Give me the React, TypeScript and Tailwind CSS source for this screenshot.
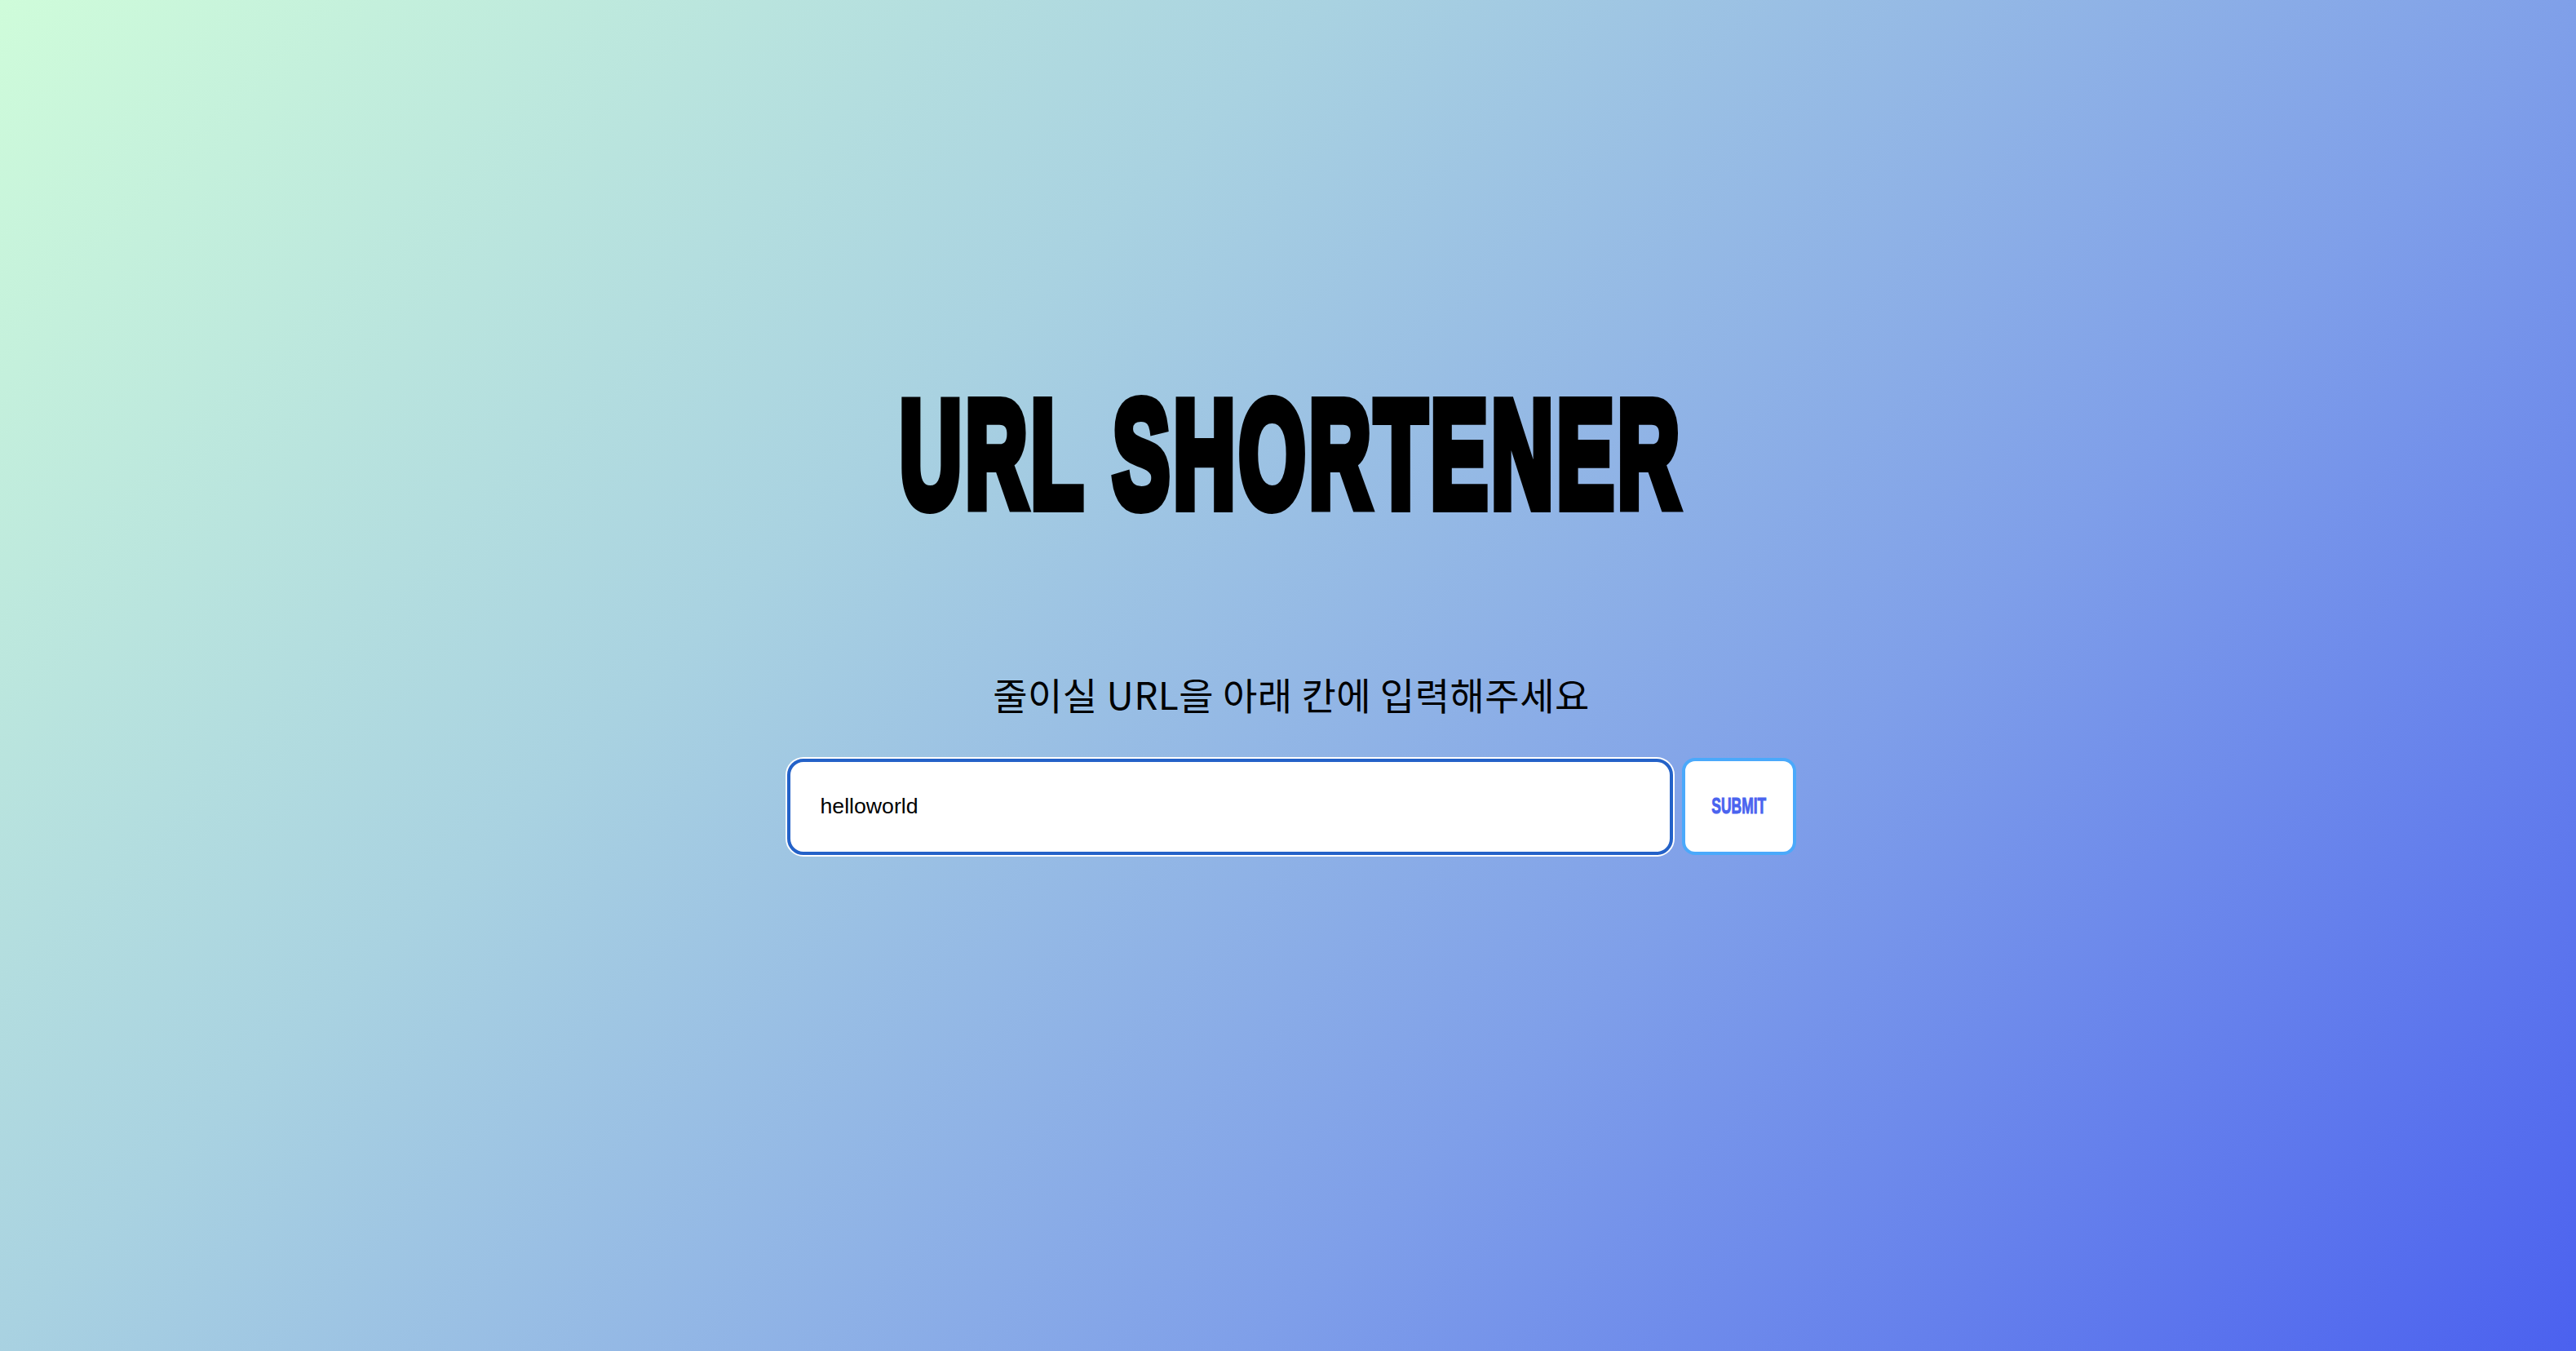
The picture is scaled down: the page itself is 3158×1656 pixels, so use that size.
import { useState } from "react";

export default function App() {
  const [url, setUrl] = useState("helloworld");

  return (
    <main className="min-h-screen w-full bg-[linear-gradient(135deg,#cffcda_0%,#a9d2e1_34%,#7f9fe9_66%,#4b61ef_100%)] flex flex-col items-center pt-[464px] pl-[8px]">
      {/* Title — condensed display face faked with a scaled, stroked bold sans */}
      <h1 className="font-['Liberation_Sans',Arial,sans-serif] font-bold text-[186px] leading-none text-black tracking-[8px] whitespace-nowrap scale-x-[0.564] [-webkit-text-stroke:14px_black]">
        URL SHORTENER
      </h1>

      <p className="mt-[177px] font-['Noto_Sans_CJK_KR','Noto_Sans',sans-serif] text-[46px] leading-none tracking-[0.5px] text-black whitespace-nowrap">
        줄이실 URL을 아래 칸에 입력해주세요
      </p>

      <form
        className="mt-[56px] flex items-center gap-[11px]"
        onSubmit={(e) => e.preventDefault()}
      >
        <input
          type="text"
          value={url}
          onChange={(e) => setUrl(e.target.value)}
          className="w-[1086px] h-[118px] bg-white rounded-[20px] border-4 border-[#2462c8] ring-2 ring-white outline-none pl-[37px] pr-6 font-['Liberation_Sans',Arial,sans-serif] text-[26.67px] text-black"
        />
        <button
          type="submit"
          className="w-[140px] h-[119px] bg-white rounded-[16px] border-4 border-[#4aa9fb] flex items-center justify-center"
        >
          <span className="inline-block font-['Liberation_Sans',Arial,sans-serif] font-bold text-[27px] leading-none text-[#4a63ef] scale-x-[0.645] [-webkit-text-stroke:1px_#4a63ef]">
            SUBMIT
          </span>
        </button>
      </form>
    </main>
  );
}
